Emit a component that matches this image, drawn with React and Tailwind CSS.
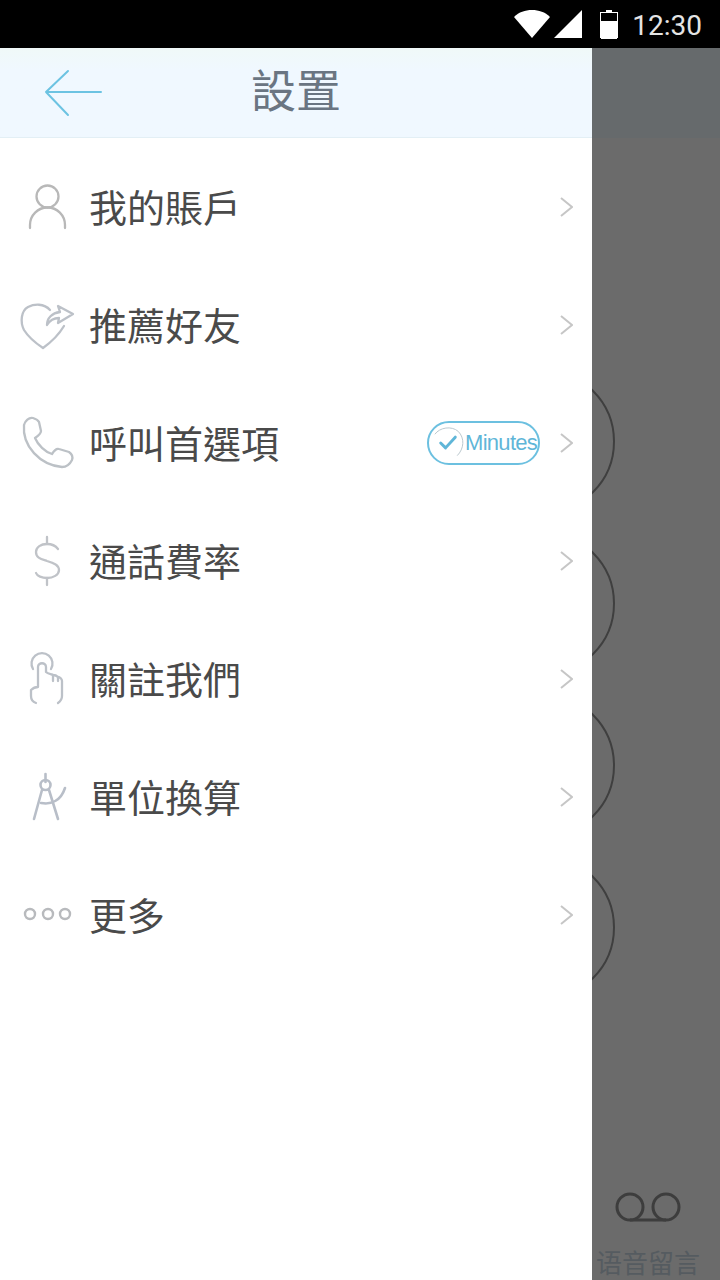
import React from 'react'

const cjk = { fontFamily: '"Noto Sans CJK TC", "Noto Sans", sans-serif' }

// Row icons share one canvas: x is page x, y is offset from the row centre
const RowIcon = ({ children, stroke = '#bcc1c8', width = 2.3 }) => (
  <svg width="90" height="80" viewBox="0 -40 90 80" fill="none" stroke={stroke} strokeWidth={width} strokeLinecap="round" strokeLinejoin="round" className="-mr-px shrink-0">
    {children}
  </svg>
)

const PersonIcon = () => (
  <RowIcon stroke="#b8b8b8">
    <circle cx="47.5" cy="-10.5" r="11" />
    <path d="M30 21v-3a17.5 17.5 0 0 1 35 0v3" />
  </RowIcon>
)

const HeartIcon = () => (
  <RowIcon>
    <path d="M50-15C44-22 34-21 28-18 21-14 20-3 24 5 29 13 37 19 43 23 50 18 58 11 64 1" />
    <path d="M47 0C47-7 52-12 60-13L58-19 73-11 58-2 59-7C54-7 50-5 47 0Z" />
  </RowIcon>
)

const PhoneIcon = () => (
  <RowIcon stroke="#bcc1c6">
    <path d="M24-18C25-22 29-26 33-25 36-24 38-23 39-21L41-12C41-9 38-7 35-5 38 2 45 9 52 11 54 8 56 5 59 6L69 9C72 11 73 14 72 17 70 21 67 24 62 24 40 22 22 3 24-18Z" />
  </RowIcon>
)

const DollarIcon = () => (
  <RowIcon stroke="#c0c3c8">
    <path d="M58-12C55-16 51-17 47-17 41-17 36-14 36-9 36-3 41-2 47 0 54 2 59 4 59 9 59 14 53 17 47 17 42 17 37 15 36 12" />
    <path d="M47-24v7M47 17v7" />
  </RowIcon>
)

const HandIcon = () => (
  <RowIcon stroke="#bcc1c8">
    <path d="M33-10A10.5 10.5 0 1 1 51-10" />
    <path d="M36 24C33 23 31 20 31 17V11C33 9 35 8 38 8V-12C38-17 46-17 46-12V-7C48-5 52-5 53-4 55-4 57-3 58-2 60-2 62 0 62 2V17C62 20 61 22 58 24" />
    <path d="M53-4V2M58-2V2" />
  </RowIcon>
)

const CompassIcon = () => (
  <RowIcon stroke="#b8bec8" width={2.6}>
    <path d="M45.5-23v8" />
    <circle cx="45.5" cy="-12" r="5" />
    <path d="M42-7 34 22M49-7 58 22" />
    <path d="M41 6C52 8 61 3 65-9" />
  </RowIcon>
)

const DotsIcon = () => (
  <RowIcon stroke="#b8babd" width={2.4}>
    <circle cx="30" cy="-1" r="5" />
    <circle cx="48" cy="-1" r="5" />
    <circle cx="65" cy="-1" r="5" />
  </RowIcon>
)

const MinutesBadge = () => (
  <div className="flex h-[44px] w-[113px] items-center rounded-full border-2 border-[#6cc0e0] pl-[1px]">
    <svg width="35" height="36" viewBox="0 0 36 36" fill="none" className="shrink-0">
      <path d="M5 9C10 2 22 0 29 6 36 13 35 24 28 31" stroke="#b9c6cc" strokeWidth="1" />
      <path d="M11 18 16 23 26 12" stroke="#5fb6d8" strokeWidth="3" strokeLinecap="round" strokeLinejoin="round" />
    </svg>
    <span className="text-[22px] leading-none tracking-[-0.7px] text-[#5fb6d8]" style={{ fontFamily: '"Liberation Sans", sans-serif' }}>Minutes</span>
  </div>
)

const menu = [
  { label: '我的賬戶', icon: PersonIcon },
  { label: '推薦好友', icon: HeartIcon },
  { label: '呼叫首選項', icon: PhoneIcon, badge: true },
  { label: '通話費率', icon: DollarIcon },
  { label: '關註我們', icon: HandIcon },
  { label: '單位換算', icon: CompassIcon },
  { label: '更多', icon: DotsIcon },
]

const StatusBar = () => (
  <div className="flex h-12 items-center justify-end bg-black pr-[18px]">
    <svg width="68" height="28" viewBox="0 0 68 28" fill="#fff" className="mr-[18px]">
      <path d="M0 7C5 2 11 0 18 0S31 2 36 7L18 28Z" />
      <path d="M68 0V28H40Z" />
    </svg>
    <div className="mr-[14px] flex flex-col items-center">
      <div className="h-[2px] w-[6px] bg-white" />
      <div className="h-[26px] w-[18px] border-x border-t border-white">
        <div className="mt-[8px] h-[18px] bg-white" />
      </div>
    </div>
    <span className="pt-[3px] text-[28px] leading-none text-[#e4e4e4]" style={{ fontFamily: 'Roboto, sans-serif' }}>12:30</span>
  </div>
)

const Drawer = () => (
  <div className="flex w-[592px] shrink-0 flex-col bg-white">
    <div className="grid h-[90px] grid-cols-[1fr_auto_1fr] items-center border-b border-[#e3eff5] bg-linear-to-b from-[#f0f9f8] to-[#f0f8ff] to-[25%]">
      <svg width="102" height="48" viewBox="0 0 102 48" fill="none" stroke="#6cc3e2" strokeWidth="2" strokeLinecap="round" strokeLinejoin="round">
        <path d="M68 2 46 23 68 46M46 23H101" />
      </svg>
      <h1 className="pb-[9px] text-[45px] leading-none font-normal text-[#6a7582]" style={cjk}>設置</h1>
      <div />
    </div>
    <ul className="pt-[10px]">
      {menu.map(({ label, icon: Icon, badge }) => (
        <li key={label} className="flex h-[118px] items-center pr-[19px]">
          <Icon />
          <span className="pb-[2px] text-[38px] leading-none text-[#4a4a4a]" style={cjk}>{label}</span>
          <div className="ml-auto flex items-center gap-[20px]">
            {badge && <MinutesBadge />}
            <svg width="13" height="20" viewBox="0 0 13 20" fill="none" stroke="#c6c6c6" strokeWidth="2">
              <path d="M1 1 12 10 1 19" />
            </svg>
          </div>
        </li>
      ))}
    </ul>
  </div>
)

// Dimmed screen showing through to the right of the drawer
const Backdrop = () => (
  <div className="flex min-w-0 flex-1 flex-col overflow-hidden bg-[#6b6b6b]">
    <div className="h-[90px] shrink-0 bg-[#666a6c]" />
    <div className="flex flex-col gap-[17px] pt-[231px]">
      {[0, 1, 2, 3].map((i) => (
        <div key={i} className="-ml-[122px] h-[145px] w-[145px] shrink-0 rounded-full border-2 border-[#3f3f3f]" />
      ))}
    </div>
    <div className="mt-auto flex h-[88px] w-[112px] shrink-0 flex-col items-center">
      <svg width="66" height="30" viewBox="0 0 66 30" fill="none" stroke="#3d3d3d" strokeWidth="3">
        <circle cx="15" cy="15" r="13" />
        <circle cx="51" cy="15" r="13" />
        <path d="M15 28H51" />
      </svg>
      <span className="mt-[27px] whitespace-nowrap text-[26px] leading-none text-[#555b60]" style={{ fontFamily: '"Noto Sans CJK SC", sans-serif' }}>语音留言</span>
    </div>
  </div>
)

const App = () => (
  <div className="flex h-[1280px] w-[720px] flex-col overflow-hidden bg-black">
    <StatusBar />
    <div className="flex min-h-0 flex-1">
      <Drawer />
      <Backdrop />
    </div>
  </div>
)

export default App
